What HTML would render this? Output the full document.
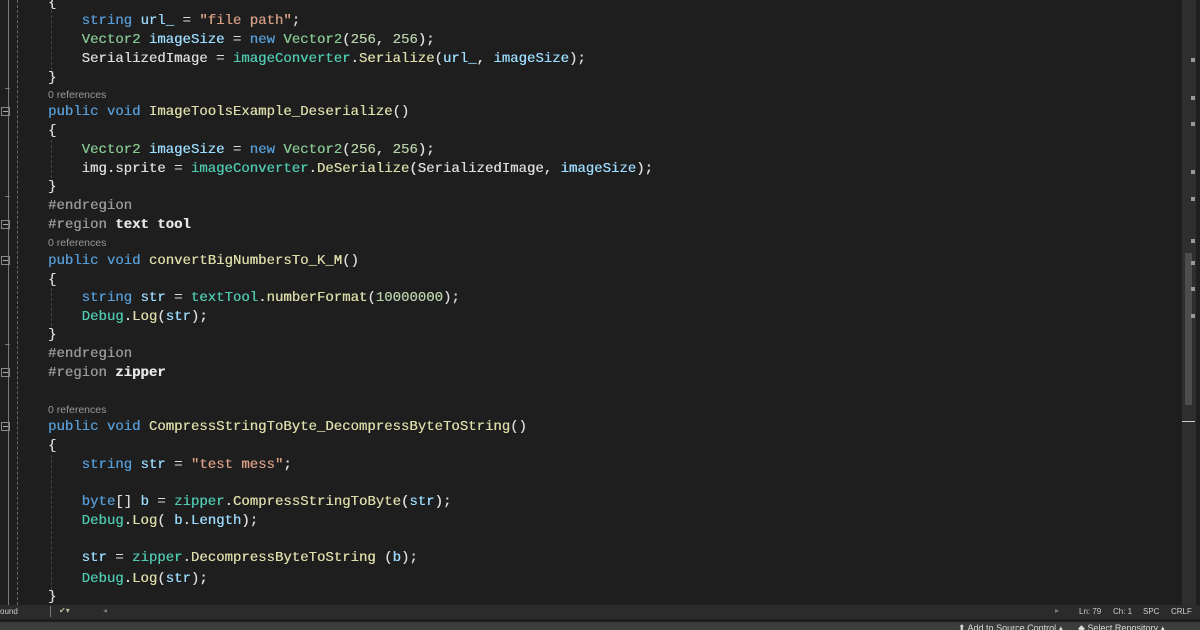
<!DOCTYPE html>
<html><head><meta charset="utf-8"><style>
html,body{margin:0;padding:0;background:#1e1e1e;width:1200px;height:630px;overflow:hidden;position:relative;font-family:"Liberation Mono",monospace;}
.l{position:absolute;left:48px;margin-top:1px;font-size:14px;line-height:18px;color:#dcdcdc;white-space:pre;text-shadow:0.3px 0 0 currentColor;}
.r{position:absolute;left:48px;font-family:"Liberation Sans",sans-serif;font-size:10.5px;color:#999;line-height:12px;}
.k{color:#569cd6}.t{color:#86c691}.c{color:#4ec9b0}.m{color:#dcdcaa}.s{color:#d69d85}.v{color:#9cdcfe}.g{color:#9b9b9b}.n{color:#b5cea8}.w{color:#e6e6e6;font-weight:bold}
.fb{position:absolute;left:1px;width:9px;height:9px;border:1px solid #888;box-sizing:border-box;}
.fb:after{content:"";position:absolute;left:1px;top:3px;width:5px;height:1px;background:#aaa;}
.tk{position:absolute;left:5px;width:5px;height:1px;background:#777;}
</style></head><body>
<div style="position:absolute;left:8px;top:0;width:1px;height:605px;background:#7a7a7a"></div>
<div style="position:absolute;left:17px;top:0;width:0;height:605px;border-left:1px dashed #666"></div>
<div style="position:absolute;left:51px;top:10px;width:0;height:60px;border-left:1px dashed #444"></div>
<div style="position:absolute;left:51px;top:140px;width:0;height:38px;border-left:1px dashed #444"></div>
<div style="position:absolute;left:51px;top:288px;width:0;height:38px;border-left:1px dashed #444"></div>
<div style="position:absolute;left:51px;top:455px;width:0;height:135px;border-left:1px dashed #444"></div>
<div class="tk" style="top:88px"></div><div class="tk" style="top:196px"></div><div class="tk" style="top:344px"></div>
<div class="fb" style="top:107px"></div><div class="fb" style="top:220px"></div><div class="fb" style="top:256px"></div>
<div class="fb" style="top:368px"></div><div class="fb" style="top:422px"></div>

<div class="l" style="top:-7px">{</div>
<div class="l" style="top:11px">    <span class="k">string</span> <span class="v">url_</span> = <span class="s">"file path"</span>;</div>
<div class="l" style="top:30px">    <span class="t">Vector2</span> <span class="v">imageSize</span> = <span class="k">new</span> <span class="t">Vector2</span>(<span class="n">256</span>, <span class="n">256</span>);</div>
<div class="l" style="top:49px">    SerializedImage = <span class="c">imageConverter</span>.<span class="m">Serialize</span>(<span class="v">url_</span>, <span class="v">imageSize</span>);</div>
<div class="l" style="top:68px">}</div>
<div class="r" style="top:89px">0 references</div>
<div class="l" style="top:102px"><span class="k">public</span> <span class="k">void</span> <span class="m">ImageToolsExample_Deserialize</span>()</div>
<div class="l" style="top:121px">{</div>
<div class="l" style="top:140px">    <span class="t">Vector2</span> <span class="v">imageSize</span> = <span class="k">new</span> <span class="t">Vector2</span>(<span class="n">256</span>, <span class="n">256</span>);</div>
<div class="l" style="top:159px">    img.sprite = <span class="c">imageConverter</span>.<span class="m">DeSerialize</span>(SerializedImage, <span class="v">imageSize</span>);</div>
<div class="l" style="top:177px">}</div>
<div class="l g" style="top:196px">#endregion</div>
<div class="l" style="top:215px"><span class="g">#region</span> <span class="w">text tool</span></div>
<div class="r" style="top:237px">0 references</div>
<div class="l" style="top:251px"><span class="k">public</span> <span class="k">void</span> <span class="m">convertBigNumbersTo_K_M</span>()</div>
<div class="l" style="top:270px">{</div>
<div class="l" style="top:288px">    <span class="k">string</span> <span class="v">str</span> = <span class="c">textTool</span>.<span class="m">numberFormat</span>(<span class="n">10000000</span>);</div>
<div class="l" style="top:307px">    <span class="c">Debug</span>.<span class="m">Log</span>(<span class="v">str</span>);</div>
<div class="l" style="top:325px">}</div>
<div class="l g" style="top:344px">#endregion</div>
<div class="l" style="top:363px"><span class="g">#region</span> <span class="w">zipper</span></div>
<div class="r" style="top:404px">0 references</div>
<div class="l" style="top:417px"><span class="k">public</span> <span class="k">void</span> <span class="m">CompressStringToByte_DecompressByteToString</span>()</div>
<div class="l" style="top:436px">{</div>
<div class="l" style="top:455px">    <span class="k">string</span> <span class="v">str</span> = <span class="s">"test mess"</span>;</div>
<div class="l" style="top:492px">    <span class="k">byte</span>[] <span class="v">b</span> = <span class="c">zipper</span>.<span class="m">CompressStringToByte</span>(<span class="v">str</span>);</div>
<div class="l" style="top:511px">    <span class="c">Debug</span>.<span class="m">Log</span>( <span class="v">b</span>.<span class="v">Length</span>);</div>
<div class="l" style="top:548px">    <span class="v">str</span> = <span class="c">zipper</span>.<span class="m">DecompressByteToString</span> (<span class="v">b</span>);</div>
<div class="l" style="top:569px">    <span class="c">Debug</span>.<span class="m">Log</span>(<span class="v">str</span>);</div>
<div class="l" style="top:587px">}</div>

<div style="position:absolute;left:1182px;top:0;width:14px;height:605px;background:#2e2e2e"></div>
<div style="position:absolute;left:1185px;top:253px;width:7px;height:152px;background:#4d4d4d"></div>
<div style="position:absolute;left:1182px;top:421px;width:13px;height:1px;background:#ccc"></div>
<div style="position:absolute;left:1191px;top:58px;width:4px;height:4px;background:#999"></div>
<div style="position:absolute;left:1191px;top:96px;width:4px;height:4px;background:#999"></div>
<div style="position:absolute;left:1191px;top:122px;width:4px;height:4px;background:#999"></div>
<div style="position:absolute;left:1191px;top:170px;width:4px;height:4px;background:#999"></div>
<div style="position:absolute;left:1191px;top:197px;width:4px;height:4px;background:#999"></div>
<div style="position:absolute;left:1191px;top:239px;width:4px;height:4px;background:#999"></div>
<div style="position:absolute;left:1191px;top:261px;width:4px;height:4px;background:#999"></div>
<div style="position:absolute;left:1191px;top:287px;width:4px;height:4px;background:#999"></div>
<div style="position:absolute;left:1191px;top:314px;width:4px;height:4px;background:#999"></div>

<div style="position:absolute;left:0;top:605px;width:1200px;height:14px;background:#2b2b2b;font-family:'Liberation Sans',sans-serif;font-size:8px;color:#ccc">
<span style="position:absolute;left:0;top:2px">ound</span>
<span style="position:absolute;left:50px;top:1px;width:1px;height:11px;background:#777"></span>
<span style="position:absolute;left:59px;top:1px;color:#bb9">✔▾</span>
<span style="position:absolute;left:103px;top:1px;color:#777">◂</span>
<span style="position:absolute;left:1055px;top:1px;color:#777">▸</span>
<span style="position:absolute;left:1079px;top:2px">Ln: 79</span>
<span style="position:absolute;left:1113px;top:2px">Ch: 1</span>
<span style="position:absolute;left:1143px;top:2px">SPC</span>
<span style="position:absolute;left:1171px;top:2px">CRLF</span>
</div>
<div style="position:absolute;left:0;top:619px;width:1200px;height:3px;background:#1e1e1e"></div>
<div style="position:absolute;left:0;top:622px;width:1200px;height:8px;background:#3c3c3c;font-family:'Liberation Sans',sans-serif;font-size:9px;color:#ddd">
<span style="position:absolute;left:958px;top:1px">⬆ Add to Source Control ▴</span>
<span style="position:absolute;left:1078px;top:1px">◆ Select Repository ▴</span>
</div>
</body></html>
